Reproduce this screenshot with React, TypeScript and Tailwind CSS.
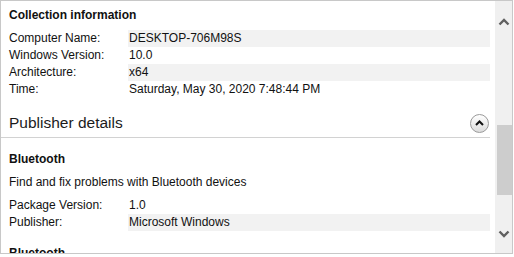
import React from 'react';

const Row: React.FC<{ label: string; value: string; shaded?: boolean }> = ({ label, value, shaded }) => (
  <div className="flex h-[17px] leading-[17px]">
    <div className="w-[119px] shrink-0">{label}</div>
    <div className={`flex-1 pl-[1px] ${shaded ? 'bg-[#f2f2f2]' : ''}`}>{value}</div>
  </div>
);

const Chevron: React.FC<{ down?: boolean; className?: string }> = ({ down, className }) => (
  <svg width="12" height="9" viewBox="0 0 12 9" className={className}>
    <path
      d={down ? 'M1.5 2.5 L6 7 L10.5 2.5' : 'M1.5 6.5 L6 2 L10.5 6.5'}
      fill="none"
      stroke="#606060"
      strokeWidth="2.4"
    />
  </svg>
);

const App: React.FC = () => {
  return (
    <div className="w-[514px] h-[257px] bg-white" style={{ fontFamily: '"Liberation Sans", Arial, sans-serif' }}>
      <div className="w-[513px] h-[254px] border border-[#c8c8c8] flex overflow-hidden text-[12px] text-[#111]">
        {/* scrolling content */}
        <div className="flex-1 overflow-hidden pl-[8px] pr-[5px]">
          <div className="pt-[6px] pb-[7px] leading-[16px] font-bold">Collection information</div>
          <Row label="Computer Name:" value="DESKTOP-706M98S" shaded />
          <Row label="Windows Version:" value="10.0" />
          <Row label="Architecture:" value="x64" shaded />
          <Row label="Time:" value="Saturday, May 30, 2020 7:48:44 PM" />

          {/* section header */}
          <div className="-ml-[8px] pl-[8px] mt-[15px] pb-[4px] border-b border-[#d2d2d2] flex items-center justify-between">
            <div className="text-[15.5px] leading-[20px] text-[#1b1b1b]">Publisher details</div>
            <button className="mr-[1px] w-[19px] h-[19px] rounded-full border border-[#9a9a9a] bg-gradient-to-b from-white to-[#dcdcdc] flex items-center justify-center">
              <svg width="9" height="6" viewBox="0 0 9 6">
                <path d="M1 5 L4.5 1.5 L8 5" fill="none" stroke="#111" strokeWidth="2" />
              </svg>
            </button>
          </div>

          <div className="mt-[13px] leading-[16px] font-bold">Bluetooth</div>
          <div className="mt-[7px] leading-[16px]">Find and fix problems with Bluetooth devices</div>
          <div className="mt-[7px]">
            <Row label="Package Version:" value="1.0" />
            <Row label="Publisher:" value="Microsoft Windows" shaded />
          </div>
          <div className="mt-[14px] leading-[16px] font-bold">Bluetooth</div>
        </div>

        {/* scrollbar */}
        <div className="w-[17px] shrink-0 bg-[#f0f0f0] flex flex-col items-center">
          <div className="h-[17px]" />
          <Chevron />
          <div className="h-[98px]" />
          <div className="h-[70px] w-[15px] ml-[1px] bg-[#cdcdcd]" />
          <div className="flex-1" />
          <Chevron down />
          <div className="h-[15px]" />
        </div>
      </div>
    </div>
  );
};

export default App;
